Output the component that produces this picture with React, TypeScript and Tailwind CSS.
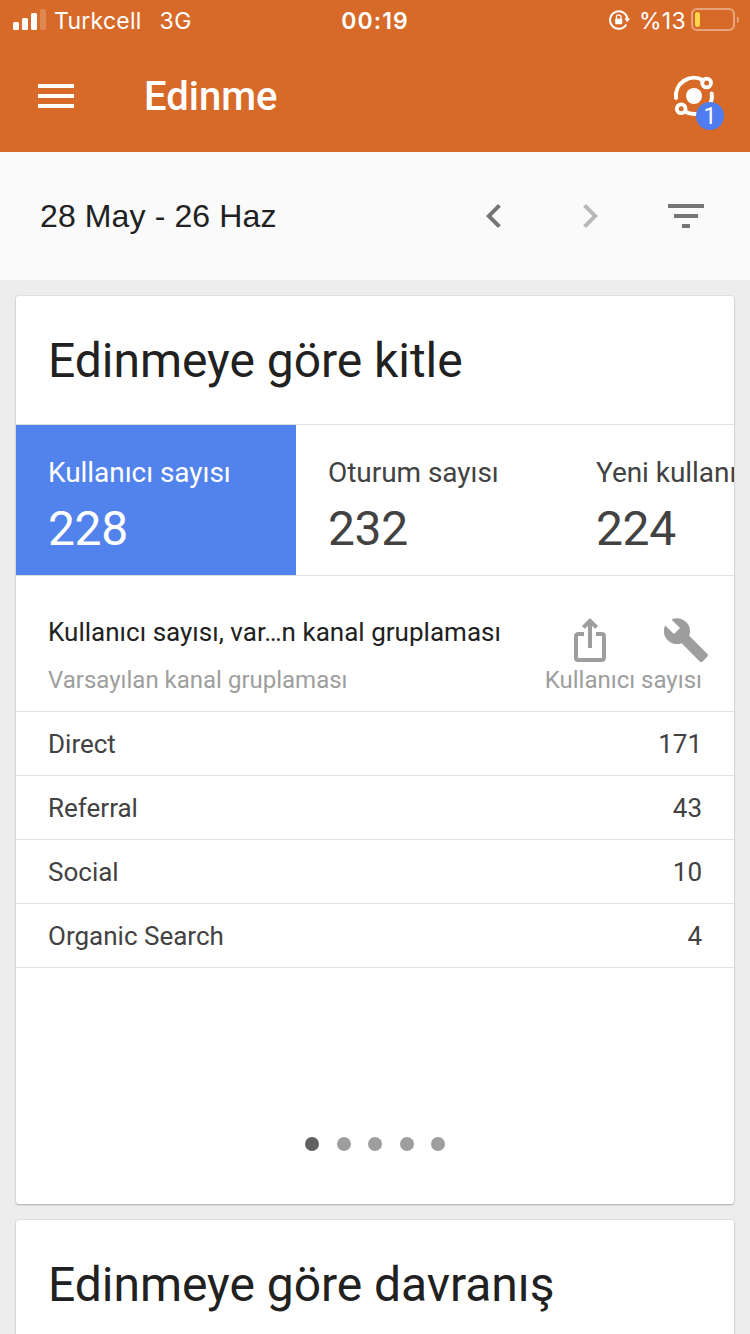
import React from 'react';
import {
    MdBuild,
    MdChevronLeft,
    MdChevronRight,
    MdFilterList,
    MdIosShare,
    MdMenu
} from 'react-icons/md';

interface Metric {
    label: string;
    value: string;
    width: string;
}

interface Channel {
    name: string;
    count: number;
}

const metrics: Metric[] = [
    { label: 'Kullanıcı sayısı', value: '228', width: 'w-[280px]' },
    { label: 'Oturum sayısı', value: '232', width: 'w-[268px]' },
    { label: 'Yeni kullanıcılar', value: '224', width: 'w-[280px]' }
];

const channels: Channel[] = [
    { name: 'Direct', count: 171 },
    { name: 'Referral', count: 43 },
    { name: 'Social', count: 10 },
    { name: 'Organic Search', count: 4 }
];

const StatusBar: React.FC = () => (
    <div className="grid h-10 grid-cols-3 items-center font-['Inter',sans-serif] text-[23px] leading-[38px] text-white">
        <div className="flex items-center pl-[13px]">
            <svg width="33" height="22" viewBox="0 0 33 22" fill="white">
                <rect x="0" y="13" width="6" height="8" rx="1.5" />
                <rect x="9" y="9" width="6" height="12" rx="1.5" />
                <rect x="18" y="4" width="6" height="17" rx="1.5" />
                <rect x="27" y="0" width="6" height="21" rx="1.5" opacity="0.2" />
            </svg>
            <span className="ml-[8px] pt-0.5 tracking-[0.25px]">Turkcell</span>
            <span className="ml-[18px] pt-0.5 tracking-[0.5px]">3G</span>
        </div>
        <div className="pt-0.5 text-center font-semibold tracking-[1.1px]">00:19</div>
        <div className="flex items-center justify-end pr-[11px]">
            <svg width="22" height="20" viewBox="0 0 22 20" fill="none" stroke="white" strokeWidth="2">
                <path d="M17.3 14.4A8.7 8.7 0 1 1 18.4 9" />
                <path d="M15.3 8.5h6l-3 3.7z" fill="white" stroke="none" />
                <path d="M7.4 9V7.1a2.3 2.3 0 0 1 4.6 0V9" strokeWidth="1.3" />
                <rect x="6.2" y="8.8" width="7" height="5.4" rx="0.8" fill="white" stroke="none" />
            </svg>
            <span className="ml-[8px] pt-0.5 tracking-[0.3px]">%13</span>
            <svg className="ml-[5px]" width="48" height="24" viewBox="0 0 48 24" fill="none">
                <rect x="1" y="1" width="42" height="21" rx="5" stroke="white" strokeOpacity="0.4" strokeWidth="2" />
                <rect x="4" y="4" width="5" height="15" rx="2.5" fill="#fbd749" />
                <path d="M46 8.5c2.6 1 2.6 5.5 0 6.5z" fill="white" fillOpacity="0.4" />
            </svg>
        </div>
    </div>
);

const InsightsButton: React.FC = () => (
    <button className="relative h-12 w-12">
        <svg width="48" height="48" viewBox="0 0 48 48" fill="none" stroke="white" strokeWidth="4">
            <circle cx="24" cy="24" r="8" fill="white" stroke="none" />
            <path d="M6 26A18 18 0 0 1 33 8.3" strokeLinecap="round" />
            <path d="M41.7 21.5A18 18 0 0 1 39 34" strokeLinecap="round" />
            <path d="M15 39.6A18 18 0 0 0 28 41.6" />
            <circle cx="36.6" cy="11" r="4.4" strokeWidth="3.8" />
            <circle cx="11.2" cy="36.8" r="4.4" strokeWidth="3.8" />
        </svg>
        <span className="absolute top-[30px] left-[26px] flex h-7 w-7 items-center justify-center rounded-full bg-[#4f7cf0] text-[23px] leading-none text-white">
            1
        </span>
    </button>
);

const App: React.FC = () => {
    return (
        <div className="flex h-[1334px] w-[750px] flex-col overflow-hidden bg-[#ededed] font-['Roboto',sans-serif] text-[#212121]">
            <header className="h-[152px] shrink-0 bg-[#d86a29]">
                <StatusBar />
                <div className="flex h-28 items-center pr-8 pl-8">
                    <MdMenu size={48} color="white" />
                    <h1 className="ml-16 flex-1 pt-0.5 text-[40px] leading-[48px] font-medium text-white">Edinme</h1>
                    <InsightsButton />
                </div>
            </header>

            {/* Date range */}
            <div className="flex h-32 shrink-0 items-center bg-[#fafafa] pr-10 pl-10 text-[#757575]">
                <span className="flex-1 font-['Liberation_Sans',sans-serif] text-[32px] tracking-[0.12px] text-[#212121]">28 May - 26 Haz</span>
                <MdChevronLeft size={48} />
                <MdChevronRight size={48} className="ml-12 text-[#b8b8b8]" />
                <MdFilterList size={48} className="ml-12" />
            </div>

            <main className="flex flex-col gap-4 px-4 pt-4">
                <section className="flex h-[908px] shrink-0 flex-col overflow-hidden rounded-[3px] bg-white shadow-[0_0_0_1px_rgba(0,0,0,0.04),0_1px_2px_rgba(0,0,0,0.24)]">
                    <h2 className="flex h-[129px] shrink-0 items-center border-b border-[#e0e0e0] px-8 pt-0.5 text-[48px] tracking-[-0.04px]">
                        Edinmeye göre kitle
                    </h2>

                    <div className="flex h-[151px] shrink-0 overflow-hidden border-b border-[#e0e0e0]">
                        {metrics.map((metric, i) => (
                            <div
                                key={metric.label}
                                className={`${metric.width} shrink-0 px-8 pt-7 whitespace-nowrap ${i === 0 ? 'bg-[#5283ec] text-white' : 'text-[#424242]'}`}
                            >
                                <div className="text-[28px] leading-[40px] tracking-[-0.05px]">{metric.label}</div>
                                <div className="text-[48px] leading-[72px] tracking-[-0.4px]">{metric.value}</div>
                            </div>
                        ))}
                    </div>

                    <div className="flex h-[136px] shrink-0 flex-col border-b border-[#e0e0e0] pt-10 pr-8 pl-8">
                        <div className="flex h-12">
                            <h3 className="flex-1 text-[26px] leading-[33px] tracking-[0.02px]">Kullanıcı sayısı, var…n kanal gruplaması</h3>
                            <div className="-mr-2 flex gap-12 text-[#9e9e9e]">
                                <MdIosShare size={48} />
                                <MdBuild size={48} />
                            </div>
                        </div>
                        <div className="flex justify-between text-[24px] leading-[32px] text-[#9e9e9e]">
                            <span>Varsayılan kanal gruplaması</span>
                            <span>Kullanıcı sayısı</span>
                        </div>
                    </div>

                    {channels.map((channel) => (
                        <div
                            key={channel.name}
                            className="flex h-16 shrink-0 items-center justify-between border-b border-[#e0e0e0] px-8 pt-0.5 text-[26px] text-[#424242]"
                        >
                            <span>{channel.name}</span>
                            <span>{channel.count}</span>
                        </div>
                    ))}

                    {/* Carousel dots */}
                    <div className="mt-auto mb-[53px] flex justify-center gap-[17.5px]">
                        {[0, 1, 2, 3, 4].map((dot) => (
                            <span
                                key={dot}
                                className={`h-3.5 w-3.5 rounded-full ${dot === 0 ? 'bg-[#616161]' : 'bg-[#9e9e9e]'}`}
                            />
                        ))}
                    </div>
                </section>

                <section className="h-[200px] shrink-0 rounded-[3px] bg-white shadow-[0_0_0_1px_rgba(0,0,0,0.04),0_1px_2px_rgba(0,0,0,0.24)]">
                    <h2 className="flex h-[129px] items-center px-8 text-[48px] tracking-[-0.04px]">Edinmeye göre davranış</h2>
                </section>
            </main>
        </div>
    );
};

export default App;
